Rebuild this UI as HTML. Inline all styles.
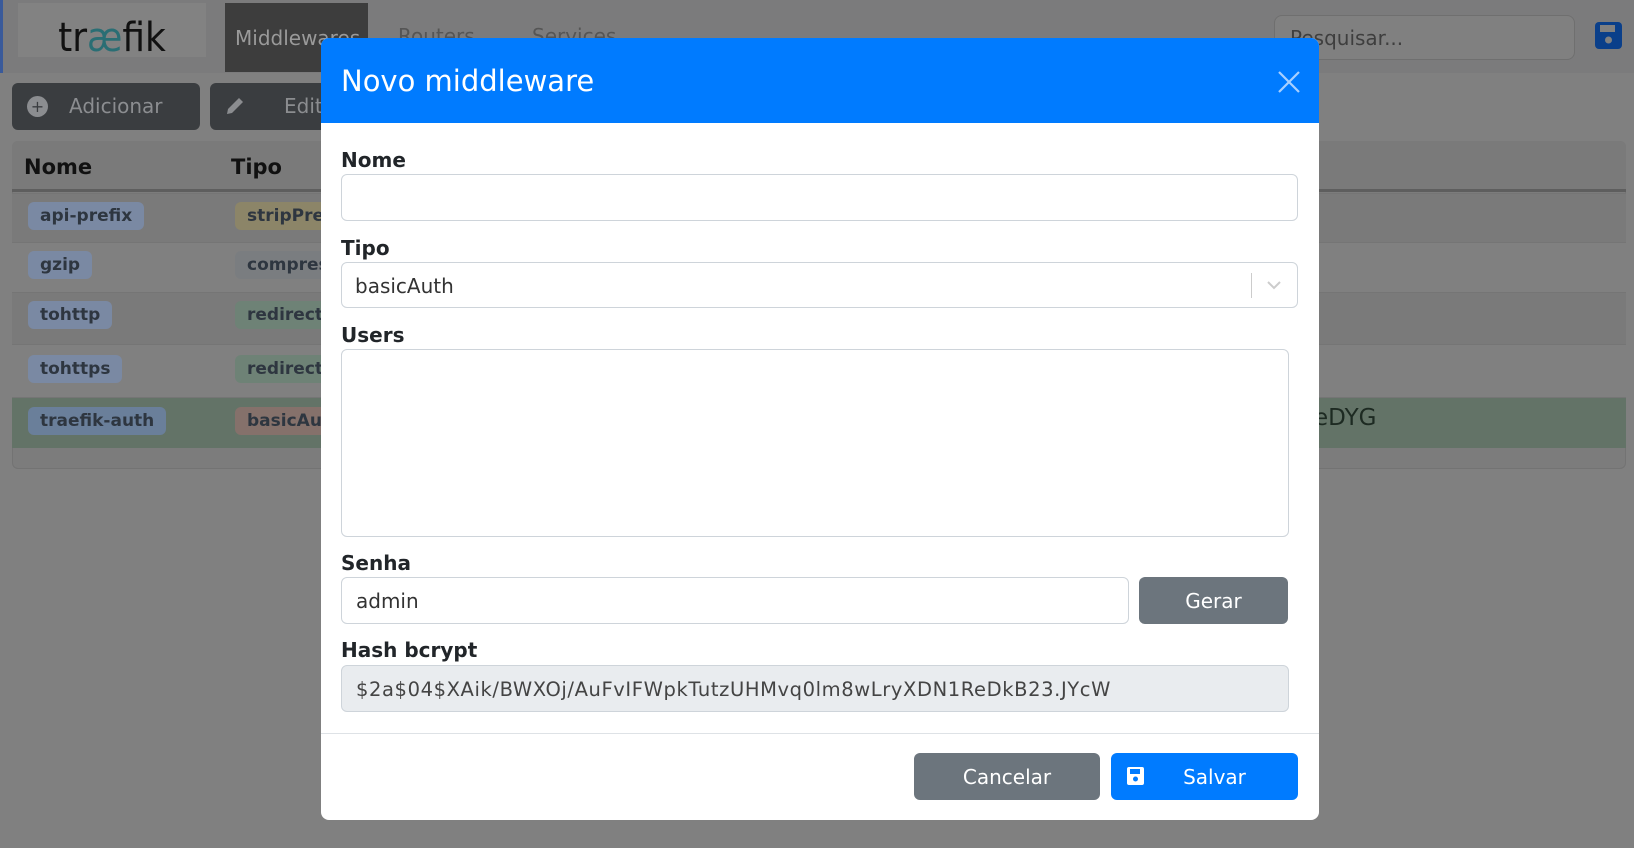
<!DOCTYPE html>
<html><head><meta charset="utf-8"><style>
*{box-sizing:border-box;margin:0;padding:0}
body{width:1634px;height:848px;background:#808080;font-family:"DejaVu Sans","Liberation Sans",sans-serif;position:relative;overflow:hidden}
.a{position:absolute}
.nav{left:0;top:0;width:1634px;height:73px;background:#7b7b7c;border-left:3px solid #3a5a9a}
.badge{position:absolute;height:28px;line-height:28px;padding:0 12px;border-radius:6px;font-size:17px;font-weight:bold;color:#2e3640}
.row{position:absolute;left:12px;width:1614px;border-top:1px solid #757575}
.lbl{position:absolute;left:341px;font-size:20px;font-weight:bold;color:#212529}
.inp{position:absolute;left:341px;background:#fff;border:1px solid #ced4da;border-radius:6px;font-size:20px;color:#333;padding-left:14px}
.btn{position:absolute;border-radius:6px;color:#fff;font-size:20px;text-align:center}
</style></head><body>
<div class="a nav"></div>
<div class="a" style="left:18px;top:3px;width:188px;height:54px;background:#828282;font-size:40px;color:#111;text-align:center;font-family:'DejaVu Sans Condensed','DejaVu Sans',sans-serif;line-height:74px"><span style="position:relative;top:-2px">tr<span style="color:#2a6e74">æ</span>fik</span></div>
<div class="a" style="left:225px;top:3px;width:143px;height:69px;background:#3d3d3d;color:#9a9a9a;font-size:20px;line-height:70px;padding-left:10px;overflow:hidden">Middlewares</div>
<div class="a" style="left:398px;top:24px;color:#555;font-size:20px">Routers</div>
<div class="a" style="left:532px;top:24px;color:#555;font-size:20px">Services</div>
<div class="a" style="left:1274px;top:15px;width:301px;height:45px;border:1px solid #6f6f6f;border-radius:8px;background:#808080;color:#3e3e3e;font-size:20px;line-height:45px;padding-left:15px">Pesquisar...</div>
<svg class="a" style="left:1595px;top:22px" width="27" height="27" viewBox="0 0 27 27"><rect x="0" y="0" width="27" height="27" rx="4" fill="#0a3f8a"/><rect x="5" y="3" width="15" height="7" fill="#808080"/><circle cx="13.5" cy="18" r="3.5" fill="#808080"/></svg>
<div class="a" style="left:12px;top:83px;width:188px;height:47px;background:#3a3d40;border-radius:6px;color:#8b8d90;font-size:20px;line-height:47px;padding-left:57px">Adicionar</div>
<div class="a" style="left:27px;top:96px;width:21px;height:21px;border-radius:50%;background:#8b8d90;color:#3a3d40;font-size:16px;text-align:center;line-height:21px">+</div>
<div class="a" style="left:210px;top:83px;width:120px;height:47px;background:#3a3d40;border-radius:6px;color:#8b8d90;font-size:20px;line-height:47px;padding-left:74px">Editar</div>
<svg class="a" style="left:223px;top:94px" width="24" height="24" viewBox="0 0 24 24"><path d="M4 20l1-5L16 4l4 4L9 19z" fill="#8b8d90"/></svg>
<div class="a" style="left:12px;top:141px;width:1614px;height:328px;border:1px solid #737373;border-radius:6px;background:#7c7c7c"></div>
<div class="a" style="left:12px;top:141px;width:1614px;height:51px;background:#7a7a7a;border-bottom:3px solid #5e5e5e;border-radius:6px 6px 0 0"></div>
<div class="a" style="left:24px;top:155px;font-size:21px;font-weight:bold;color:#111">Nome</div>
<div class="a" style="left:231px;top:155px;font-size:21px;font-weight:bold;color:#111">Tipo</div>
<div class="row" style="top:193px;height:49px;background:#7a7a7a"></div>
<div class="row" style="top:242px;height:50px;background:#808080"></div>
<div class="row" style="top:292px;height:52px;background:#7a7a7a"></div>
<div class="row" style="top:344px;height:53px;background:#808080"></div>
<div class="row" style="top:397px;height:51px;background:#637367"></div>
<div class="badge" style="left:28px;top:202px;background:#7a89a3">api-prefix</div>
<div class="badge" style="left:28px;top:251px;background:#7a89a3">gzip</div>
<div class="badge" style="left:28px;top:301px;background:#7a89a3">tohttp</div>
<div class="badge" style="left:28px;top:355px;background:#7a89a3">tohttps</div>
<div class="badge" style="left:28px;top:407px;background:#6a7f9a">traefik-auth</div>
<div class="badge" style="left:235px;top:202px;background:#8c8568">stripPrefix</div>
<div class="badge" style="left:235px;top:251px;background:#7a7d80">compress</div>
<div class="badge" style="left:235px;top:301px;background:#6e8276">redirectScheme</div>
<div class="badge" style="left:235px;top:355px;background:#6e8276">redirectScheme</div>
<div class="badge" style="left:235px;top:407px;background:#85716b">basicAuth</div>
<div class="a" style="left:1314px;top:405px;font-size:23px;color:#1d2a22">eDYG</div>

<div class="a" style="left:321px;top:38px;width:998px;height:782px;background:#fff;border-radius:8px;overflow:hidden">
<div style="height:85px;background:#007bff;color:#fff;font-size:29px;padding:26px 0 0 20px">Novo middleware</div>
</div>
<svg class="a" style="left:1278px;top:71px" width="22" height="22" viewBox="0 0 22 22"><path d="M1 1L21 21M21 1L1 21" stroke="#a8d0ff" stroke-width="2.2"/></svg>
<div class="lbl" style="top:148px">Nome</div>
<div class="inp" style="top:174px;width:957px;height:47px"></div>
<div class="lbl" style="top:236px">Tipo</div>
<div class="inp" style="top:262px;width:957px;height:46px;line-height:46px;color:#333;padding-left:13px">basicAuth</div>
<div class="a" style="left:1251px;top:273px;width:1px;height:25px;background:#ccc"></div>
<svg class="a" style="left:1266px;top:280px" width="16" height="10" viewBox="0 0 16 10"><path d="M2 2l6 6 6-6" stroke="#ccc" stroke-width="2" fill="none"/></svg>
<div class="lbl" style="top:323px">Users</div>
<div class="inp" style="top:349px;width:948px;height:188px"></div>
<div class="lbl" style="top:551px">Senha</div>
<div class="inp" style="top:577px;width:788px;height:47px;line-height:47px">admin</div>
<div class="btn" style="left:1139px;top:577px;width:149px;height:47px;line-height:48px;background:#6c757d">Gerar</div>
<div class="lbl" style="top:638px">Hash bcrypt</div>
<div class="inp" style="top:665px;width:948px;height:47px;line-height:47px;background:#e9ecef;color:#444;font-size:19.5px;letter-spacing:0.6px">$2a$04$XAik/BWXOj/AuFvIFWpkTutzUHMvq0lm8wLryXDN1ReDkB23.JYcW</div>
<div class="a" style="left:321px;top:733px;width:998px;height:1px;background:#dee2e6"></div>
<div class="btn" style="left:914px;top:753px;width:186px;height:47px;line-height:48px;background:#6c757d">Cancelar</div>
<div class="btn" style="left:1111px;top:753px;width:187px;height:47px;line-height:48px;background:#007bff;padding-left:20px">Salvar</div>
<svg class="a" style="left:1127px;top:767px" width="17" height="18" viewBox="0 0 17 18"><rect width="17" height="18" rx="2" fill="#fff"/><rect x="3" y="2" width="10" height="5" fill="#007bff"/><circle cx="8.5" cy="12" r="2.5" fill="#007bff"/></svg>
</body></html>
